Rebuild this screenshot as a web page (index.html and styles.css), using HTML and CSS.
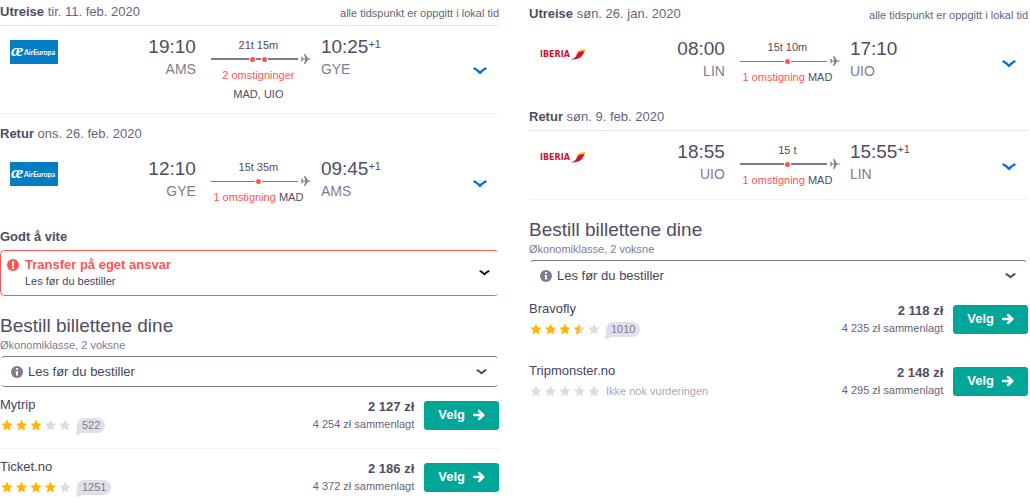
FILE: index.html
```html
<!DOCTYPE html>
<html lang="no">
<head>
<meta charset="utf-8">
<meta name="viewport" content="width=device-width, initial-scale=1">
<title>Bestill billettene dine</title>
<link rel="stylesheet" href="styles.css">
</head>
<body>
<svg class="defs" aria-hidden="true">
  <defs>
    <symbol id="chevron" viewBox="0 0 14 8"><path d="M1.500 1.500Q4.500 3.200 7 5.800Q9.500 3.200 12.500 1.500" fill="none" stroke="currentColor" stroke-width="2.500" stroke-linecap="round" stroke-linejoin="round"/></symbol>
    <symbol id="plane" viewBox="0 0 10 10"><path d="M0 2.800h1l1.400 1.600h2L3 0h1.200l2.900 4.400h1.700q1.200.1 1.200.6t-1.200.6H7.100L4.200 10H3l1.400-4.400h-2L1 7.200H0L.7 5z" fill="currentColor"/></symbol>
    <symbol id="arrow" viewBox="0 0 12 12"><path d="M1 6h9M6 2L10.300 6 6 10" fill="none" stroke="currentColor" stroke-width="2.400" stroke-linecap="round" stroke-linejoin="round"/></symbol>
    <symbol id="alert" viewBox="0 0 12 12"><circle cx="6" cy="6" r="6" fill="currentColor"/><path d="M6 3v3.400" stroke="#fff" stroke-width="2" stroke-linecap="round"/><circle cx="6" cy="9.100" r="1.100" fill="#fff"/></symbol>
    <symbol id="info" viewBox="0 0 12 12"><circle cx="6" cy="6" r="6" fill="currentColor"/><path d="M5 2h2v1.700H5zM4.500 5H7v4.500H5V6h-.5z" fill="#fff"/></symbol>
    <path id="star" d="M6 .5L7.700 4.300 11.700 4.700 8.700 7.400 9.600 11.500 6 9.400 2.400 11.500 3.300 7.400 .3 4.700 4.300 4.300z"/>
    <path id="half" d="M6 .5V9.400L2.400 11.500 3.300 7.400 .3 4.700 4.300 4.300z"/>
    <symbol id="aireuropa" viewBox="0 0 48 24">
      <rect width="48" height="24" fill="#037dc4"/>
      <text x="1" y="16" class="ae-mark">æ</text>
      <text x="14" y="15" class="ae-name">AirEuropa</text>
    </symbol>
    <symbol id="iberia" viewBox="0 0 48 24">
      <text x="1" y="15" class="iberia-name">IBERIA</text>
      <path d="M32 17.500Q37 16 38 12 40 8.300 46 8.600L44 12.500Q41 17.800 32 17.500z" fill="#d2142d"/>
      <path d="M37 11.500Q40 7 46.500 7.300L45.500 9.500Q41 8.800 37 11.500z" fill="#fdb913"/>
    </symbol>
  </defs>
</svg>

<main class="page">
  <section class="trip">
    <header class="head head-first"><h2 class="head-title">Utreise <span class="date">tir. 11. feb. 2020</span></h2><span class="note">alle tidspunkt er oppgitt i lokal tid</span></header>
    <article class="leg leg-top leg-bottom">
      <svg class="logo" role="img" aria-label="AirEuropa"><use href="#aireuropa"/></svg>
      <div class="stop stop-from"><span class="time">19:10</span><span class="code">AMS</span></div>
      <div class="route">
        <span class="caption">21t 15m</span>
        <div class="rail"><div class="line line-bold"><span class="dot"></span><span class="dot"></span></div><svg class="plane"><use href="#plane"/></svg></div>
        <span class="caption vias"><span class="stops">2 omstigninger</span> <span class="via">MAD, UIO</span></span>
      </div>
      <div class="stop"><span class="time">10:25<sup>+1</sup></span><span class="code">GYE</span></div>
      <button class="toggle" aria-label="Vis detaljer"><svg class="chevron"><use href="#chevron"/></svg></button>
    </article>
    <header class="head"><h2 class="head-title">Retur <span class="date">ons. 26. feb. 2020</span></h2></header>
    <article class="leg">
      <svg class="logo" role="img" aria-label="AirEuropa"><use href="#aireuropa"/></svg>
      <div class="stop stop-from"><span class="time">12:10</span><span class="code">GYE</span></div>
      <div class="route">
        <span class="caption">15t 35m</span>
        <div class="rail"><div class="line"><span class="dot"></span></div><svg class="plane"><use href="#plane"/></svg></div>
        <span class="caption vias"><span class="stops">1 omstigning</span> <span class="via">MAD</span></span>
      </div>
      <div class="stop"><span class="time">09:45<sup>+1</sup></span><span class="code">AMS</span></div>
      <button class="toggle" aria-label="Vis detaljer"><svg class="chevron"><use href="#chevron"/></svg></button>
    </article>
    <header class="head"><h2 class="head-title">Godt å vite</h2></header>
    <button class="panel panel-alert">
      <svg class="icon"><use href="#alert"/></svg>
      <span class="panel-text"><strong class="alert-title">Transfer på eget ansvar</strong><span class="alert-sub">Les før du bestiller</span></span>
      <svg class="chevron-small"><use href="#chevron"/></svg>
    </button>
    <h1 class="title">Bestill billettene dine</h1>
    <p class="subtitle">Økonomiklasse, 2 voksne</p>
    <button class="panel panel-info">
      <svg class="icon"><use href="#info"/></svg>
      <span class="panel-text">Les før du bestiller</span>
      <svg class="chevron-small"><use href="#chevron"/></svg>
    </button>
    <article class="offer offer-line">
      <div class="seller"><span class="name">Mytrip</span>
        <div class="rating"><svg class="stars" viewBox="0 0 71 12" role="img" aria-label="3 av 5"><g class="on"><use href="#star" x="1"/><use href="#star" x="15.500"/><use href="#star" x="30"/></g><g class="off"><use href="#star" x="44.500"/><use href="#star" x="59"/></g></svg><span class="badge">522</span></div>
      </div>
      <div class="cost"><span class="price">2 127 zł</span><span class="total">4 254 zł sammenlagt</span></div>
      <button class="select">Velg <svg class="arrow"><use href="#arrow"/></svg></button>
    </article>
    <article class="offer">
      <div class="seller"><span class="name">Ticket.no</span>
        <div class="rating"><svg class="stars" viewBox="0 0 71 12" role="img" aria-label="4 av 5"><g class="on"><use href="#star" x="1"/><use href="#star" x="15.500"/><use href="#star" x="30"/><use href="#star" x="44.500"/></g><g class="off"><use href="#star" x="59"/></g></svg><span class="badge">1251</span></div>
      </div>
      <div class="cost"><span class="price">2 186 zł</span><span class="total">4 372 zł sammenlagt</span></div>
      <button class="select">Velg <svg class="arrow"><use href="#arrow"/></svg></button>
    </article>
  </section>

  <section class="trip trip-second">
    <header class="head head-first"><h2 class="head-title">Utreise <span class="date">søn. 26. jan. 2020</span></h2><span class="note">alle tidspunkt er oppgitt i lokal tid</span></header>
    <article class="leg">
      <svg class="logo" role="img" aria-label="Iberia"><use href="#iberia"/></svg>
      <div class="stop stop-from"><span class="time">08:00</span><span class="code">LIN</span></div>
      <div class="route">
        <span class="caption">15t 10m</span>
        <div class="rail"><div class="line"><span class="dot"></span></div><svg class="plane"><use href="#plane"/></svg></div>
        <span class="caption vias"><span class="stops">1 omstigning</span> <span class="via">MAD</span></span>
      </div>
      <div class="stop"><span class="time">17:10</span><span class="code">UIO</span></div>
      <button class="toggle" aria-label="Vis detaljer"><svg class="chevron"><use href="#chevron"/></svg></button>
    </article>
    <header class="head"><h2 class="head-title">Retur <span class="date">søn. 9. feb. 2020</span></h2></header>
    <article class="leg leg-top leg-bottom">
      <svg class="logo" role="img" aria-label="Iberia"><use href="#iberia"/></svg>
      <div class="stop stop-from"><span class="time">18:55</span><span class="code">UIO</span></div>
      <div class="route">
        <span class="caption">15 t</span>
        <div class="rail"><div class="line line-bold"><span class="dot"></span></div><svg class="plane"><use href="#plane"/></svg></div>
        <span class="caption vias"><span class="stops">1 omstigning</span> <span class="via">MAD</span></span>
      </div>
      <div class="stop"><span class="time">15:55<sup>+1</sup></span><span class="code">LIN</span></div>
      <button class="toggle" aria-label="Vis detaljer"><svg class="chevron"><use href="#chevron"/></svg></button>
    </article>
    <h1 class="title">Bestill billettene dine</h1>
    <p class="subtitle">Økonomiklasse, 2 voksne</p>
    <button class="panel panel-info panel-open">
      <svg class="icon"><use href="#info"/></svg>
      <span class="panel-text">Les før du bestiller</span>
      <svg class="chevron-small"><use href="#chevron"/></svg>
    </button>
    <article class="offer">
      <div class="seller"><span class="name">Bravofly</span>
        <div class="rating"><svg class="stars" viewBox="0 0 71 12" role="img" aria-label="3,5 av 5"><g class="off"><use href="#star" x="44.500"/><use href="#star" x="59"/></g><g class="on"><use href="#star" x="1"/><use href="#star" x="15.500"/><use href="#star" x="30"/><use href="#half" x="44.500"/></g></svg><span class="badge">1010</span></div>
      </div>
      <div class="cost"><span class="price">2 118 zł</span><span class="total">4 235 zł sammenlagt</span></div>
      <button class="select">Velg <svg class="arrow"><use href="#arrow"/></svg></button>
    </article>
    <article class="offer">
      <div class="seller"><span class="name">Tripmonster.no</span>
        <div class="rating"><svg class="stars" viewBox="0 0 71 12" role="img" aria-label="Ingen vurdering"><g class="off"><use href="#star" x="1"/><use href="#star" x="15.500"/><use href="#star" x="30"/><use href="#star" x="44.500"/><use href="#star" x="59"/></g></svg><span class="unrated">Ikke nok vurderingen</span></div>
      </div>
      <div class="cost"><span class="price">2 148 zł</span><span class="total">4 295 zł sammenlagt</span></div>
      <button class="select">Velg <svg class="arrow"><use href="#arrow"/></svg></button>
    </article>
  </section>
</main>
</body>
</html>
```
FILE: styles.css
```css
* { box-sizing: border-box; }

body {
  margin: 0;
  background: #fff;
  color: #524c61;
  font: 13px/16px "Liberation Sans", Arial, sans-serif;
}

svg { display: block; flex: none; }
.defs { position: absolute; width: 0; height: 0; }

button {
  margin: 0;
  padding: 0;
  border: 0;
  background: none;
  color: inherit;
  font: inherit;
  text-align: left;
  cursor: pointer;
}

.page {
  display: grid;
  grid-template-columns: 1fr 1fr;
  gap: 30px;
  padding-right: 2px;
}

.trip { min-width: 0; padding-top: 4px; }
.trip-second { padding-top: 6px; }

/* Section headings */
.head {
  display: flex;
  justify-content: space-between;
  padding: 12px 0 5px;
}
.head-first { padding-top: 0; }
.head-title { margin: 0; font-size: 13px; line-height: 16px; }
.date { font-weight: normal; color: #68647a; }
.note { padding-top: 2px; font-size: 11px; line-height: 14px; color: #68647a; }

/* Flight legs */
.leg {
  display: grid;
  grid-template-columns: 48px 9fr 105px 10fr 14px;
  column-gap: 10px;
  padding: 12px 12px 9px 10px;
  border: 1px solid transparent;
  border-width: 1px 0;
}
.leg-top { border-top-color: #e6e5eb; }
.leg-bottom { border-bottom-color: #f1f0f4; }
.logo { width: 48px; height: 24px; margin-top: 2px; }
.stop { display: flex; flex-direction: column; }
.stop-from { align-items: flex-end; }
.time { font-size: 19px; line-height: 18px; }
.time sup { font-size: 11px; line-height: 1; vertical-align: 5px; }
.code { padding-top: 4px; font-size: 14px; line-height: 18px; color: #7f7b8f; }

.route { padding-left: 5px; }
.caption {
  display: block;
  padding-right: 5px;
  font-size: 11px;
  line-height: 14px;
  text-align: center;
}
.vias { line-height: 19px; }
.stops { color: #ff5452; white-space: nowrap; }
.via { white-space: nowrap; }
.rail { display: flex; align-items: center; gap: 3px; height: 14px; color: #7f7b8f; }
.line {
  display: flex;
  flex: 1;
  align-items: center;
  justify-content: center;
  gap: 7px;
  height: 1px;
  padding-left: 8px;
  background: #7f7b8f;
}
.line-bold { height: 2px; }
.dot {
  flex: none;
  width: 5px;
  height: 5px;
  border-radius: 50%;
  background: #ff5452;
  box-shadow: 0 0 0 1px #fff;
}
.plane { width: 10px; height: 10px; }
.toggle { align-self: center; color: #0770e3; }
.chevron { width: 14px; height: 8px; }

/* Airline names */
.ae-mark { font: italic bold 17px "Liberation Serif", serif; fill: #fff; }
.ae-name { font: bold 7px Lato, sans-serif; fill: #fff; }
.iberia-name { font: bold 8px "DejaVu Sans", sans-serif; fill: #d2142d; }

/* Expandable panels */
.panel {
  display: flex;
  align-items: center;
  width: 100%;
  border: 1px solid #7f7b8f;
  border-radius: 5px;
}
.icon { width: 12px; height: 12px; }
.panel-text { display: flex; flex: 1; flex-direction: column; }
.chevron-small { width: 11px; height: 6px; }
.panel-alert {
  padding: 6px 8px 6px 6px;
  border-color: #ff5452;
  border-right-color: transparent;
  color: #111;
}
.panel-alert .icon { align-self: flex-start; margin: 2px 6px 0 0; color: #ff5452; }
.alert-title { color: #ff5452; }
.alert-sub { font-size: 11px; color: #444560; }
.panel-info {
  padding: 7px 11px 6px 10px;
  border-left-color: transparent;
  border-right-color: transparent;
  color: #444560;
}
.panel-info .icon { margin-right: 5px; color: #7f7b8f; }
.panel-open { border-bottom-color: transparent; }

.title { margin: 18px 0 0; font-size: 19px; line-height: 24px; font-weight: normal; }
.subtitle { margin: 0 0 4px; font-size: 11px; line-height: 14px; color: #7f7b8f; }

/* Ticket offers */
.offer {
  display: flex;
  align-items: center;
  gap: 10px;
  padding: 10px 0 14px;
  border-bottom: 1px solid transparent;
}
.offer-line { border-bottom-color: #f1f0f4; }
.offer:last-child { padding-bottom: 0; }
.seller { flex: 1; min-width: 0; }
.name { display: block; color: #444560; }
.rating { display: flex; align-items: center; gap: 6px; height: 18px; margin-top: 3px; }
.stars { width: 71px; height: 12px; }
.on { fill: #ffb700; }
.off { fill: #dddde5; }
.badge {
  position: relative;
  height: 15px;
  padding: 0 5px;
  border-radius: 8px;
  background: #e1dfe8;
  color: #7f7b8f;
  font-size: 11px;
  line-height: 15px;
}
.badge::after {
  content: "";
  position: absolute;
  left: -1px;
  top: 7px;
  width: 8px;
  height: 11px;
  background: #e1dfe8;
  clip-path: polygon(15% 0, 100% 70%, 0 100%);
}
.unrated { font-size: 11px; color: #aaa7b5; }
.cost { display: flex; flex-direction: column; align-items: flex-end; }
.price { font-weight: bold; }
.total { padding-top: 1px; font-size: 11px; line-height: 16px; color: #68647a; }
.select {
  display: flex;
  align-items: center;
  gap: 8px;
  padding: 6px 14px 7px;
  border-radius: 3px;
  background: #00a698;
  color: #fff;
  font-weight: bold;
}
.arrow { width: 12px; height: 12px; }
```
